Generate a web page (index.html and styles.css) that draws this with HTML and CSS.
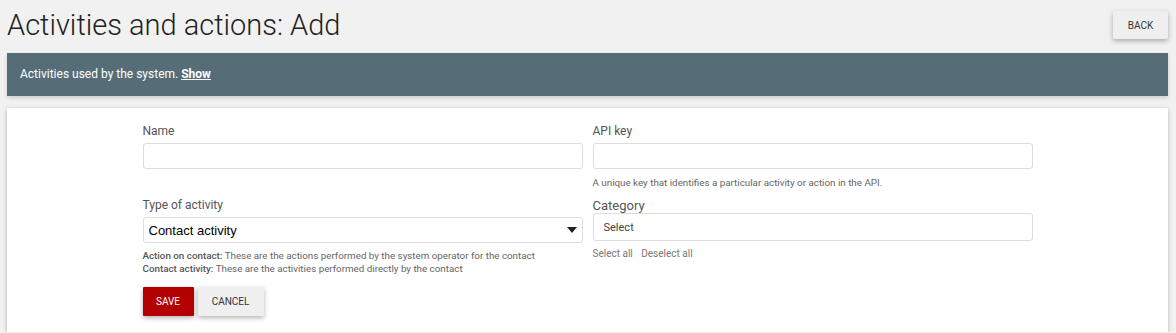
FILE: index.html
```html
<!DOCTYPE html>
<html lang="en">
<head>
  <meta charset="UTF-8" />
  <meta name="viewport" content="width=device-width, initial-scale=1.0"/>
  <title>Activities and actions: Add</title>
  <link rel="stylesheet" href="styles.css">
</head>
<body>
  <div class="header">
    <h1>Activities and actions: Add</h1>
    <button class="back-btn">BACK</button>
  </div>

  <div class="info-banner">
    Activities used by the system. <a href="#">Show</a>
  </div>

  <div class="card">
    <form class="edit-form">
      <div class="form-group">
        <label for="name">Name</label>
        <input type="text" id="name" />
      </div>
      <div class="form-group">
        <label for="apiKey">API key</label>
        <input type="text" id="apiKey" />
        <p class="hint">A unique key that identifies a particular activity or action in the API.</p>
      </div>

      <div class="form-group">
        <label for="type">Type of activity</label>
        <div class="select-box">
          <select id="type">
            <option>Contact activity</option>
            <option>Action on contact</option>
          </select>
          <svg width="10" height="6" viewBox="0 0 10 6"><path d="M0 0h10L5 6z" fill="#222"/></svg>
        </div>
        <p class="hint type-hint">
          <b>Action on contact:</b> These are the actions performed by the system operator for the contact<br>
          <b>Contact activity:</b> These are the activities performed directly by the contact
        </p>
      </div>
      <div class="form-group">
        <label class="category-label">Category</label>
        <div class="multi-select">Select</div>
        <div class="select-links">
          <a href="#">Select all</a>
          <a href="#">Deselect all</a>
        </div>
      </div>

      <div class="form-actions">
        <button type="submit" class="save-btn">SAVE</button>
        <button type="button" class="cancel-btn">CANCEL</button>
      </div>
    </form>
  </div>
</body>
</html>
```

FILE: styles.css
```css
body {
  margin: 0;
  padding: 0 8px 0 7px;
  background: #f1f1f1;
  font-family: 'Roboto', sans-serif;
  color: #333;
}

.header {
  display: flex;
  justify-content: space-between;
  align-items: flex-start;
  height: 53px;
}

.header h1 {
  margin: 0;
  padding-top: 5px;
  font-size: 29px;
  font-weight: 300;
  line-height: 40px;
  color: #222;
}

.back-btn {
  margin-top: 11px;
  width: 55px;
  height: 28px;
  padding: 0;
  background: #efefef;
  color: #333;
  border: none;
  border-radius: 2px;
  font-family: 'Roboto', sans-serif;
  font-size: 10px;
  box-shadow: 0 2px 5px rgba(0, 0, 0, 0.3);
}

.info-banner {
  height: 43px;
  line-height: 43px;
  padding: 0 13px;
  background: #566d78;
  color: #fff;
  font-size: 12px;
  box-shadow: 0 2px 4px rgba(0, 0, 0, 0.15);
}

.info-banner a {
  color: #fff;
  font-weight: 700;
}

.card {
  margin-top: 12px;
  padding: 16px 0 16px;
  background: #fff;
  box-shadow: 0 1px 4px rgba(0, 0, 0, 0.25);
}

.edit-form {
  width: 890px;
  margin: 0 auto;
  display: grid;
  grid-template-columns: 1fr 1fr;
  column-gap: 10px;
}

.form-group {
  min-height: 74px;
}

label {
  display: block;
  font-size: 12px;
  line-height: 15px;
  margin-bottom: 4px;
  color: #555;
}

.category-label {
  font-size: 13px;
  margin-bottom: 0;
}

input[type="text"] {
  display: block;
  width: 100%;
  height: 26px;
  box-sizing: border-box;
  border: 1px solid #ddd;
  border-radius: 3px;
}

.hint {
  margin: 7px 0 0;
  font-size: 9.8px;
  line-height: 13px;
  color: #666;
}

.hint b {
  font-weight: 500;
  color: #555;
}

.type-hint {
  margin-top: 6px;
}

.select-box {
  display: flex;
  align-items: center;
  height: 26px;
  box-sizing: border-box;
  border: 1px solid #ddd;
  border-radius: 3px;
  padding: 0 5px 0 5px;
}

.select-box select {
  flex: 1;
  appearance: none;
  border: none;
  background: none;
  padding: 0;
  font-family: 'Liberation Sans', Arial, sans-serif;
  font-size: 13px;
  color: #000;
  outline: none;
}

.multi-select {
  height: 28px;
  line-height: 28px;
  box-sizing: border-box;
  border: 1px solid #ddd;
  border-radius: 3px;
  padding: 0 10px;
  font-size: 11px;
  color: #444;
}

.select-links {
  margin-top: 7px;
  font-size: 10px;
}

.select-links a {
  color: #777;
  text-decoration: none;
  margin-right: 6px;
}

.form-actions {
  grid-column: 1 / 3;
  display: flex;
  gap: 4px;
  margin-top: 12px;
}

.form-actions button {
  height: 29px;
  border: none;
  border-radius: 1px;
  font-family: 'Roboto', sans-serif;
  font-size: 10px;
  box-shadow: 0 2px 5px rgba(0, 0, 0, 0.3);
}

.save-btn {
  width: 51px;
  background: #b30000;
  color: #fff;
}

.cancel-btn {
  width: 66px;
  background: #efefef;
  color: #333;
}
```
